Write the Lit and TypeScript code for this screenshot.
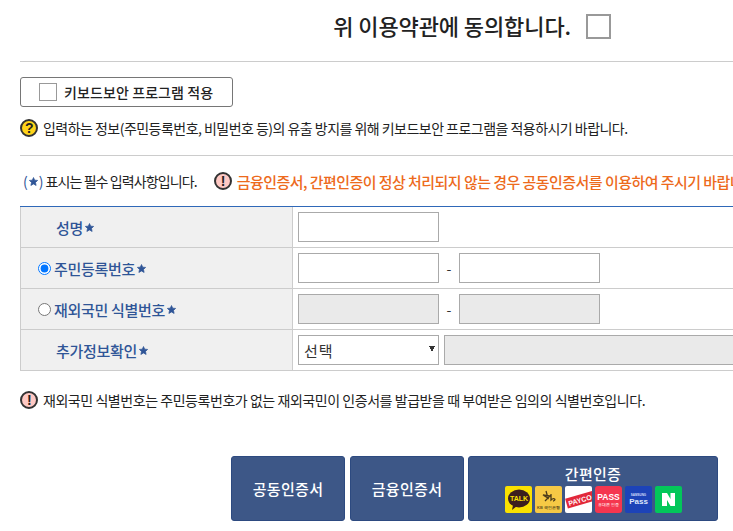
import { LitElement, html, css } from 'lit';
import { customElement } from 'lit/decorators.js';

const star = html`<svg class="star" viewBox="0 0 10 10" width="9" height="9"><path d="M5 .6 6.3 3.5 9.6 3.8 7.2 6 7.9 9.4 5 7.7 2.1 9.4 2.8 6 .4 3.8 3.7 3.5Z" fill="#2f5597" stroke="#2f5597" stroke-width=".8" stroke-linejoin="round"/></svg>`;

const badge = (kind: 'warn' | 'ask') => html`<span class="badge ${kind}">${kind === 'warn' ? '!' : '?'}</span>`;

const logos = html`
  <svg class="logo" viewBox="0 0 27 27">
    <rect width="27" height="27" rx="2" fill="#fae100"/>
    <ellipse cx="14" cy="12.5" rx="11" ry="9" fill="#3c1e1e"/>
    <path d="M8 19 7 24 12 20Z" fill="#3c1e1e"/>
    <text x="14" y="15" class="t" font-size="7" fill="#fae100">TALK</text>
  </svg>
  <svg class="logo" viewBox="0 0 27 27">
    <rect width="27" height="27" rx="2" fill="#f6c945"/>
    <path d="M11 5 13 12 8 9 15 10 10 15M16 8V14C19 11 22 14 18 15" fill="none" stroke="#4a3a1a" stroke-width="1.3"/>
    <text x="13.5" y="23" class="t" font-size="4" fill="#6a5520">KB 국민은행</text>
  </svg>
  <svg class="logo" viewBox="0 0 27 27">
    <rect width="27" height="27" rx="2" fill="#fff"/>
    <g transform="rotate(-16 14 14)">
      <rect x="1" y="9" width="30" height="10" fill="#e2283a"/>
      <text x="15" y="17" class="t" font-size="7" fill="#fff">PAYCO</text>
    </g>
  </svg>
  <svg class="logo" viewBox="0 0 27 27">
    <rect width="27" height="27" rx="3" fill="#f5364f"/>
    <text x="13.5" y="14" class="t" font-size="8.5" fill="#fff">PASS</text>
    <text x="13.5" y="20" class="t" font-size="3.5" fill="#ffd5da">휴대폰 인증</text>
  </svg>
  <svg class="logo" viewBox="0 0 27 27">
    <rect width="27" height="27" rx="2" fill="#1d43b8"/>
    <text x="13.5" y="10" class="t" font-size="3" fill="#d5defa">SAMSUNG</text>
    <text x="13.5" y="18" class="t" font-size="8" fill="#dfe6fb">Pass</text>
  </svg>
  <svg class="logo" viewBox="0 0 27 27">
    <rect width="27" height="27" rx="2" fill="#03c75a"/>
    <path d="M7 7H12L15.5 13V7H20V20H15.5L12 14V20H7Z" fill="#fff"/>
  </svg>
`;

@customElement('app-root')
class AppRoot extends LitElement {
  static styles = css`
    :host {
      display: block;
      width: 733px;
      height: 531px;
      overflow: hidden;
      background: #fff;
      font-family: 'Noto Sans CJK KR', 'Noto Sans', sans-serif;
      color: #222;
      font-size: 14px;
    }
    .page {
      width: 760px;
      padding-left: 20px;
      box-sizing: border-box;
    }
    .agree {
      height: 62px;
      box-sizing: border-box;
      padding: 14px 149px 0 0;
      display: flex;
      justify-content: flex-end;
      align-items: flex-start;
      gap: 15px;
      border-bottom: 1px solid #ccc;
      font-size: 22px;
      font-weight: 500;
      letter-spacing: -0.1px;
    }
    .agree span { line-height: 26px; margin-top: -2px; }
    .box {
      appearance: none;
      margin: 0;
      background: #fff;
      box-sizing: border-box;
    }
    .box.big {
      width: 25px;
      height: 25px;
      border: 2px solid #999;
    }
    .box.small {
      width: 18px;
      height: 18px;
      border: 1px solid #999;
    }
    .kbd {
      display: flex;
      align-items: center;
      gap: 7px;
      box-sizing: border-box;
      width: 213px;
      height: 30px;
      margin-top: 15px;
      padding-left: 18px;
      border: 1px solid #767676;
      border-radius: 3px;
      font-size: 14px;
      font-weight: 500;
      letter-spacing: 0.1px;
    }
    .line {
      display: flex;
      align-items: center;
      white-space: nowrap;
      letter-spacing: -0.53px;
    }
    .help {
      height: 49px;
      padding-bottom: 6px;
      box-sizing: border-box;
      gap: 5px;
      border-bottom: 1px solid #ccc;
    }
    .badge {
      flex: none;
      width: 14px;
      height: 14px;
      border-radius: 50%;
      border: 2px solid #333;
      display: flex;
      align-items: center;
      justify-content: center;
      font: 700 14px 'Liberation Sans', sans-serif;
      color: #222;
      box-sizing: content-box;
    }
    .badge.ask { background: #ffd31a; }
    .badge.warn { background: #ffc9c4; }
    .required {
      height: 50px;
      padding-left: 3px;
      letter-spacing: -0.9px;
    }
    .required .mark { color: #2f5597; margin-right: 2px; letter-spacing: 0; display: flex; align-items: center; }
    .required .mark .star { margin: 0 1px; }
    .required .alert {
      display: flex;
      align-items: center;
      gap: 5px;
      margin-left: 17px;
      color: #ed6a1c;
      font-size: 15px;
      font-weight: 500;
      letter-spacing: -0.55px;
    }
    .form {
      width: 740px;
      border-top: 1px solid #2f68b8;
      border-bottom: 1px solid #ccc;
    }
    .row {
      display: grid;
      grid-template-columns: 273px 1fr;
      height: 40px;
      border-top: 1px solid #ccc;
    }
    .row:first-child { border-top: 0; }
    .head {
      display: flex;
      align-items: center;
      background: #f0f0f0;
      border-left: 1px solid #ccc;
      border-right: 1px solid #ccc;
      padding-left: 35px;
      color: #2f5597;
      font-size: 15px;
      font-weight: 500;
      letter-spacing: -0.3px;
      gap: 2px;
    }
    .head.radio { padding-left: 17px; }
    .head input[type='radio'] {
      width: 13px;
      height: 13px;
      margin: 0 1px 0 0;
    }
    .cell {
      display: flex;
      align-items: center;
      padding-left: 5px;
      gap: 5px;
    }
    .field {
      box-sizing: border-box;
      width: 141px;
      height: 30px;
      border: 1px solid #aaa;
      background: #fff;
      margin: 0;
      padding: 0;
    }
    .field[disabled] { background: #eaeaea; }
    .dash { width: 10px; text-align: center; font-size: 14px; color: #333; }
    select.field {
      appearance: none;
      padding-left: 5px;
      font: 15px 'Noto Sans CJK KR', sans-serif;
      letter-spacing: 1px;
      color: #333;
      background:
        linear-gradient(to bottom right, #333 50%, transparent 50%) 133px 10px / 3px 6px no-repeat,
        linear-gradient(to bottom left, #333 50%, transparent 50%) 130px 10px / 3px 6px no-repeat,
        #fff;
    }
    .wide { width: 320px; flex: none; }
    .note {
      height: 58px;
      gap: 5px;
      letter-spacing: -0.45px;
    }
    .actions {
      display: flex;
      margin: 27px 0 0 211px;
      gap: 5px;
    }
    .btn {
      box-sizing: border-box;
      width: 114px;
      height: 65px;
      display: flex;
      flex-direction: column;
      align-items: center;
      justify-content: center;
      background: #3d5787;
      border: 1px solid #2d4a80;
      border-radius: 3px;
      color: #fff;
      font-size: 15px;
      font-weight: 500;
      letter-spacing: 0.3px;
    }
    .btn.simple { width: 250px; margin-left: -1px; line-height: 20px; gap: 2px; }
    .logos { display: flex; gap: 3px; }
    .logo { display: block; width: 27px; height: 27px; }
    .t {
      font-family: 'Liberation Sans', sans-serif;
      font-weight: 700;
      text-anchor: middle;
      letter-spacing: 0;
    }
  `;

  render() {
    return html`
      <div class="page">
        <div class="agree">
          <span>위 이용약관에 동의합니다.</span>
          <input class="box big" type="checkbox" />
        </div>
        <label class="kbd"><input class="box small" type="checkbox" />키보드보안 프로그램 적용</label>
        <div class="line help">${badge('ask')}입력하는 정보(주민등록번호, 비밀번호 등)의 유출 방지를 위해 키보드보안 프로그램을 적용하시기 바랍니다.</div>
        <div class="line required">
          <span class="mark">(${star})</span>표시는 필수 입력사항입니다.
          <span class="alert">${badge('warn')}금융인증서, 간편인증이 정상 처리되지 않는 경우 공동인증서를 이용하여 주시기 바랍니다.</span>
        </div>
        <div class="form">
          <div class="row">
            <div class="head">성명${star}</div>
            <div class="cell"><input class="field" /></div>
          </div>
          <div class="row">
            <label class="head radio"><input type="radio" name="id" checked />주민등록번호${star}</label>
            <div class="cell"><input class="field" /><span class="dash">-</span><input class="field" /></div>
          </div>
          <div class="row">
            <label class="head radio"><input type="radio" name="id" />재외국민 식별번호${star}</label>
            <div class="cell"><input class="field" disabled /><span class="dash">-</span><input class="field" disabled /></div>
          </div>
          <div class="row">
            <div class="head">추가정보확인${star}</div>
            <div class="cell">
              <select class="field"><option>선택</option></select>
              <input class="field wide" disabled />
            </div>
          </div>
        </div>
        <div class="line note">${badge('warn')}재외국민 식별번호는 주민등록번호가 없는 재외국민이 인증서를 발급받을 때 부여받은 임의의 식별번호입니다.</div>
        <div class="actions">
          <div class="btn">공동인증서</div>
          <div class="btn">금융인증서</div>
          <div class="btn simple">
            간편인증
            <div class="logos">${logos}</div>
          </div>
        </div>
      </div>
    `;
  }
}

declare global {
  interface HTMLElementTagNameMap {
    'app-root': AppRoot;
  }
}
